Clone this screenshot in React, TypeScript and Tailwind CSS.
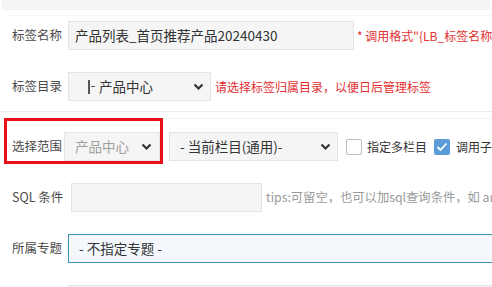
import React from "react";

const font = "font-['Microsoft_YaHei','Noto_Sans_CJK_SC',sans-serif]";

function Chevron({ className = "" }: { className?: string }) {
  return (
    <svg width="11" height="8" viewBox="0 0 11 8" className={className}>
      <polyline points="1.5,1.5 5.5,5.5 9.5,1.5" fill="none" stroke="#333" strokeWidth="2.2" />
    </svg>
  );
}

function Label({ children }: { children: React.ReactNode }) {
  return <div className="w-[57px] shrink-0 pl-[12px] text-[12.5px] text-[#4a4a4a] whitespace-nowrap">{children}</div>;
}

export default function App() {
  return (
    <div className={`w-[492px] h-[287px] overflow-hidden bg-white ${font}`}>
      {/* top band */}
      <div className="mx-[2px] h-[10px] bg-[#f3f5f6]" />
      <div className="ml-[8px] mt-[5px] border-t border-[#f6f6f6]" />

      {/* 标签名称 */}
      <div className="mt-[5px] flex items-center h-[29px]">
        <Label>标签名称</Label>
        <div className="ml-[11px] w-[286px] h-[29px] shrink-0 flex items-center px-[6px] bg-[#f5f5f5] border border-[#e4e4e4] text-[13.5px] text-[#333]">
          产品列表_首页推荐产品20240430
        </div>
        <span className="ml-[3px] text-[12px] text-[#e23030] whitespace-nowrap">* 调用格式"{"{"}LB_标签名称{"}"}</span>
      </div>

      {/* 标签目录 */}
      <div className="mt-[22px] flex items-center h-[29px]">
        <Label>标签目录</Label>
        <div className="ml-[11px] w-[143px] h-[29px] shrink-0 flex items-center justify-between pl-[19px] pr-[6px] bg-[#f5f5f5] border border-[#e4e4e4] text-[13.5px] text-[#333]">
          <span className="flex items-center">
            <span className="inline-block w-[2px] h-[14px] bg-[#555] mr-[1px]" />
            <span className="inline-block w-[4px] h-[1px] bg-[#555] mr-[4px]" />
            产品中心
          </span>
          <Chevron />
        </div>
        <span className="ml-[4px] text-[12px] text-[#e23030] whitespace-nowrap">请选择标签归属目录，以便日后管理标签</span>
      </div>

      <div className="mt-[10px] border-t border-[#ececec]" />
      <div className="mt-[6px] border-t border-[#f0f0f0]" />

      {/* 选择范围 */}
      <div className="relative mt-[13px] flex items-center h-[29px]">
        <Label>选择范围</Label>
        <div className="ml-[7px] w-[96px] h-[29px] shrink-0 flex items-center justify-between pl-[10px] pr-[7px] bg-[#f5f5f5] border border-[#e8e8e8] text-[13.5px] text-[#a0a0a0]">
          产品中心
          <Chevron />
        </div>
        <div className="ml-[9px] w-[169px] h-[29px] shrink-0 flex items-center justify-between pl-[10px] pr-[6px] bg-[#f5f5f5] border border-[#e4e4e4] text-[13.5px] text-[#333]">
          - 当前栏目(通用)-
          <Chevron />
        </div>
        <div className="ml-[8px] w-[16px] h-[16px] shrink-0 rounded-[2px] border border-[#bdbdbd] bg-white" />
        <span className="ml-[5px] text-[12px] text-[#333] whitespace-nowrap">指定多栏目</span>
        <div className="ml-[7px] w-[16px] h-[16px] shrink-0 rounded-[2px] bg-[#5a9bd8] flex items-center justify-center">
          <svg width="12" height="10" viewBox="0 0 12 10">
            <polyline points="1.5,5 4.5,8 10.5,1.5" fill="none" stroke="#fff" strokeWidth="1.8" />
          </svg>
        </div>
        <span className="ml-[6px] text-[12px] text-[#333] whitespace-nowrap">调用子栏目</span>
        {/* annotation box */}
        <div className="absolute left-[4px] top-[-14px] w-[159px] h-[46px] border-[3px] border-[#e8111a] pointer-events-none" />
      </div>

      {/* SQL 条件 */}
      <div className="mt-[22px] flex items-center h-[29px]">
        <Label>SQL 条件</Label>
        <div className="ml-[14px] w-[191px] h-[29px] shrink-0 bg-[#f5f5f5] border border-[#e4e4e4]" />
        <span className="ml-[4px] text-[12.3px] text-[#9a9a9a] whitespace-nowrap">tips:可留空，也可以加sql查询条件，如 and a.id=1</span>
      </div>

      {/* 所属专题 */}
      <div className="mt-[22px] flex items-center h-[29px]">
        <Label>所属专题</Label>
        <div className="ml-[11px] w-[440px] h-[29px] shrink-0 flex items-center pl-[10px] bg-[#f4f8fc] border border-[#3a92b8] text-[13.5px] text-[#333]">
          - 不指定专题 -
        </div>
      </div>

      <div className="mt-[22px] ml-[68px] h-[29px] w-[440px] bg-[#f5f5f5] border border-[#e4e4e4]" />
    </div>
  );
}
